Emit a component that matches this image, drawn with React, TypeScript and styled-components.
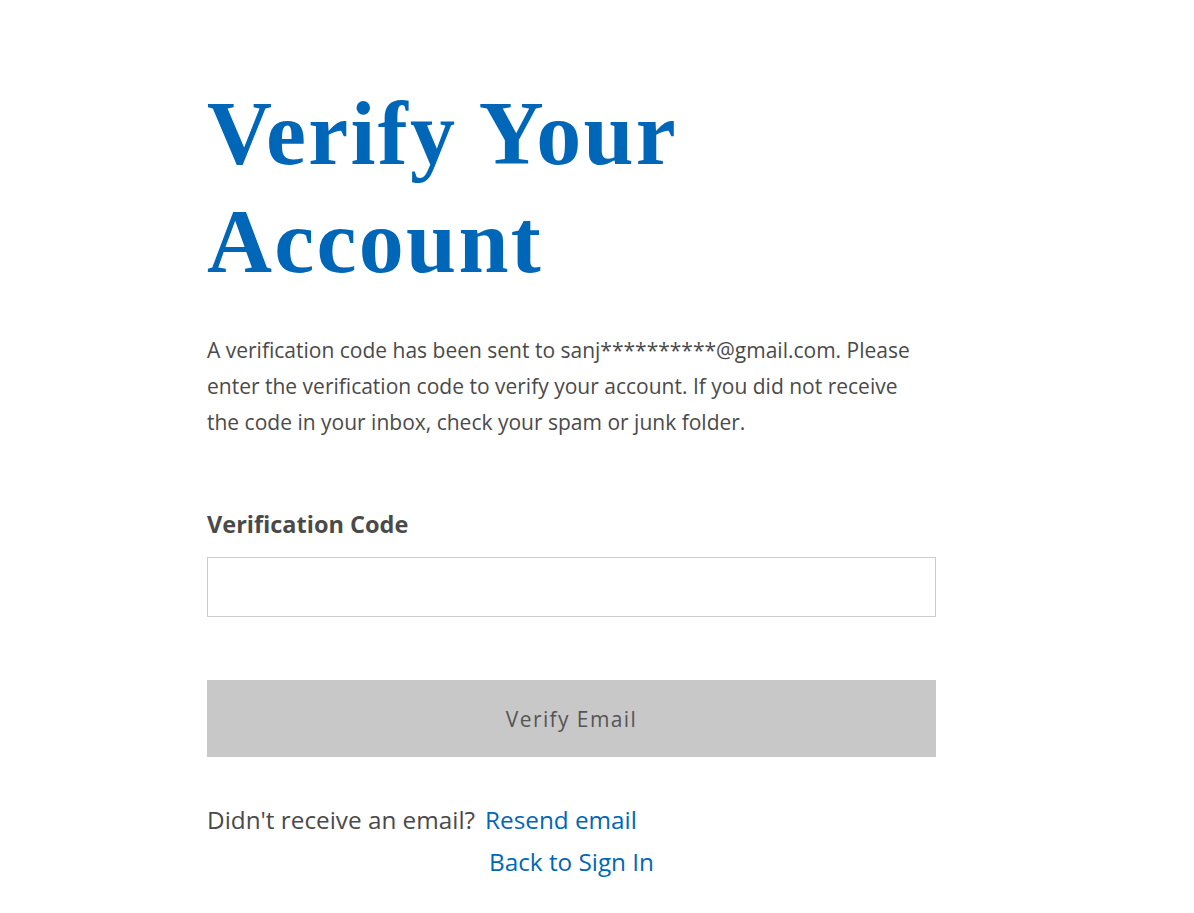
import { useState } from 'react';
import styled, { createGlobalStyle } from 'styled-components';

const BLUE = '#0067b8';
const TEXT = '#4a4a4a';

const GlobalStyle = createGlobalStyle`
  html, body {
    margin: 0;
    padding: 0;
    background: #fff;
  }
  body {
    font-family: 'Open Sans', 'Liberation Sans', sans-serif;
    color: ${TEXT};
  }
`;

export default function App() {
  const [code, setCode] = useState('');

  return (
    <>
      <GlobalStyle />
      <StyledPage>
        <StyledCard>
          <StyledTitle>Verify Your Account</StyledTitle>
          <StyledLead>
            A verification code has been sent to sanj**********@gmail.com.
            Please enter the verification code to verify your account. If you
            did not receive the code in your inbox, check your spam or junk
            folder.
          </StyledLead>

          <StyledForm onSubmit={(e) => e.preventDefault()}>
            <StyledLabel htmlFor="code">Verification Code</StyledLabel>
            <StyledInput
              id="code"
              value={code}
              onChange={(e) => setCode(e.target.value)}
            />
            <StyledButton type="submit" disabled={!code}>
              Verify Email
            </StyledButton>
          </StyledForm>

          <StyledResendRow>
            Didn't receive an email?
            <StyledLink href="#">Resend email</StyledLink>
          </StyledResendRow>
          <StyledBackRow>
            <StyledLink href="#">Back to Sign In</StyledLink>
          </StyledBackRow>
        </StyledCard>
      </StyledPage>
    </>
  );
}

const StyledPage = styled.main`
  display: flex;
  justify-content: flex-start;
  padding: 80px 0 40px 207px;
`;

const StyledCard = styled.section`
  display: flex;
  flex-direction: column;
  width: 729px;
`;

const StyledTitle = styled.h1`
  margin: 0;
  width: 520px;
  font-family: 'Liberation Serif', 'Times New Roman', serif;
  font-weight: 700;
  font-size: 90px;
  line-height: 108px;
  letter-spacing: 2.3px;
  color: ${BLUE};
`;

const StyledLead = styled.p`
  max-width: 718px;
  margin: 36px 0 0;
  font-size: 21px;
  line-height: 36px;
  color: ${TEXT};
`;

const StyledForm = styled.form`
  display: flex;
  flex-direction: column;
  margin-top: 69px;
`;

const StyledLabel = styled.label`
  font-size: 23.5px;
  font-weight: 700;
  line-height: 30px;
  color: ${TEXT};
`;

const StyledInput = styled.input`
  box-sizing: border-box;
  height: 60px;
  margin-top: 18px;
  padding: 0 12px;
  border: 1px solid #cccccc;
  border-radius: 0;
  font-family: inherit;
  font-size: 20px;
  color: ${TEXT};
  outline: none;
`;

const StyledButton = styled.button`
  height: 77px;
  margin-top: 63px;
  border: none;
  border-radius: 0;
  background: #c8c8c8;
  font-family: inherit;
  font-size: 21px;
  letter-spacing: 1.4px;
  color: #555555;
  cursor: pointer;

  &:disabled {
    cursor: default;
  }
`;

const StyledResendRow = styled.div`
  display: flex;
  gap: 10px;
  margin-top: 48px;
  font-size: 24.3px;
  line-height: 30px;
  color: ${TEXT};
`;

const StyledBackRow = styled.div`
  display: flex;
  justify-content: center;
  margin-top: 12px;
  font-size: 24.3px;
  line-height: 30px;
`;

const StyledLink = styled.a`
  color: ${BLUE};
  text-decoration: none;
`;
